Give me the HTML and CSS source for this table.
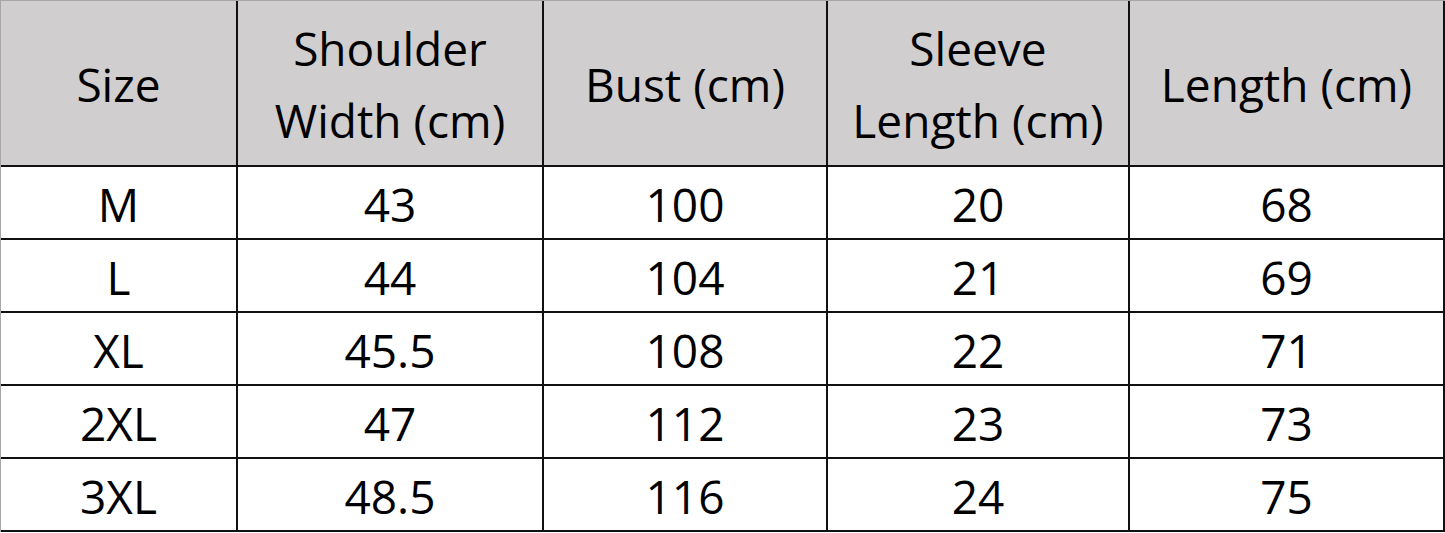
FILE: index.html
```html
<!DOCTYPE html>
<html lang="en">
<head>
<meta charset="utf-8">
<title>Size Chart</title>
<link rel="stylesheet" href="styles.css">
</head>
<body>
<div class="chart">
  <div class="cell head">Size</div>
  <div class="cell head">Shoulder<br>Width (cm)</div>
  <div class="cell head">Bust (cm)</div>
  <div class="cell head">Sleeve<br>Length (cm)</div>
  <div class="cell head last">Length (cm)</div>

  <div class="cell">M</div><div class="cell">43</div><div class="cell">100</div><div class="cell">20</div><div class="cell last">68</div>
  <div class="cell">L</div><div class="cell">44</div><div class="cell">104</div><div class="cell">21</div><div class="cell last">69</div>
  <div class="cell">XL</div><div class="cell">45.5</div><div class="cell">108</div><div class="cell">22</div><div class="cell last">71</div>
  <div class="cell">2XL</div><div class="cell">47</div><div class="cell">112</div><div class="cell">23</div><div class="cell last">73</div>
  <div class="cell">3XL</div><div class="cell">48.5</div><div class="cell">116</div><div class="cell">24</div><div class="cell last">75</div>
</div>
</body>
</html>
```
FILE: styles.css
```css
html, body {
  margin: 0;
  padding: 0;
  background: #ffffff;
}

.chart {
  display: grid;
  grid-template-columns: 237px 306px 284px 302px 315px;
  grid-template-rows: 166px repeat(5, 73px);
  width: 1445px;
  box-sizing: border-box;
  border-top: 1px solid #a6a6a6;
  border-left: 1px solid #a6a6a6;
  font-family: "Open Sans", "Lato", sans-serif;
  font-size: 46px;
  color: #000;
}

.cell {
  display: flex;
  align-items: center;
  justify-content: center;
  text-align: center;
  border-right: 2px solid #111;
  border-bottom: 2px solid #111;
  line-height: 72px;
  padding-top: 2px;
}

.head {
  background: #d0cece;
  padding-top: 2px;
}

.cell.last {
  border-right: 2px solid #111;
}
```
